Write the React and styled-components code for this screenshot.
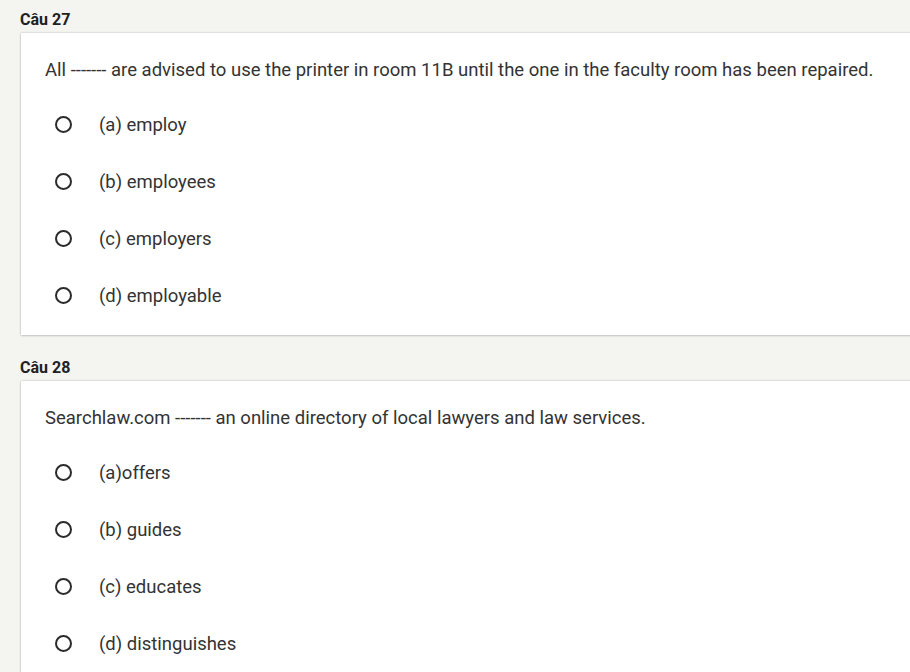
import React from 'react';
import styled, { createGlobalStyle } from 'styled-components';

const questions = [
  {
    id: 27,
    text: 'All ------- are advised to use the printer in room 11B until the one in the faculty room has been repaired.',
    options: ['(a) employ', '(b) employees', '(c) employers', '(d) employable'],
  },
  {
    id: 28,
    text: 'Searchlaw.com ------- an online directory of local lawyers and law services.',
    options: ['(a)offers', '(b) guides', '(c) educates', '(d) distinguishes'],
  },
];

function App() {
  return (
    <>
      <GlobalStyle />
      <Page>
        {questions.map((q) => (
          <Section key={q.id}>
            <Label>Câu {q.id}</Label>
            <Card>
              <QuestionText>{q.text}</QuestionText>
              {q.options.map((opt) => (
                <OptionRow key={opt}>
                  <Radio />
                  <OptionText>{opt}</OptionText>
                </OptionRow>
              ))}
            </Card>
          </Section>
        ))}
      </Page>
    </>
  );
}

const GlobalStyle = createGlobalStyle`
  body {
    margin: 0;
    background-color: #f4f4f1;
    font-family: Roboto, 'Liberation Sans', sans-serif;
    overflow: hidden;
  }
`;

const Page = styled.div`
  padding: 10px 0 0 20px;
  display: flex;
  flex-direction: column;
  gap: 23px;
`;

const Section = styled.div`
  display: flex;
  flex-direction: column;
`;

const Label = styled.div`
  font-size: 16px;
  font-weight: 700;
  line-height: 20px;
  color: #202124;
  margin-bottom: 3px;
`;

const Card = styled.div`
  width: 920px;
  margin-left: 1px;
  background-color: #ffffff;
  box-shadow: 0 0 2px rgba(0, 0, 0, 0.25), 0 1px 2px rgba(0, 0, 0, 0.12);
  padding: 25px 0 11px 24px;
  box-sizing: border-box;
`;

const QuestionText = styled.div`
  font-size: 18.5px;
  line-height: 24px;
  color: #333333;
  margin-bottom: 14px;
`;

const OptionRow = styled.div`
  height: 57px;
  display: flex;
  align-items: center;
`;

const Radio = styled.span`
  width: 17px;
  height: 17px;
  box-sizing: border-box;
  border: 2px solid #2b2b2b;
  border-radius: 50%;
  margin-left: 10px;
  margin-right: 27px;
`;

const OptionText = styled.span`
  font-size: 18.5px;
  color: #333333;
`;

export default App;
